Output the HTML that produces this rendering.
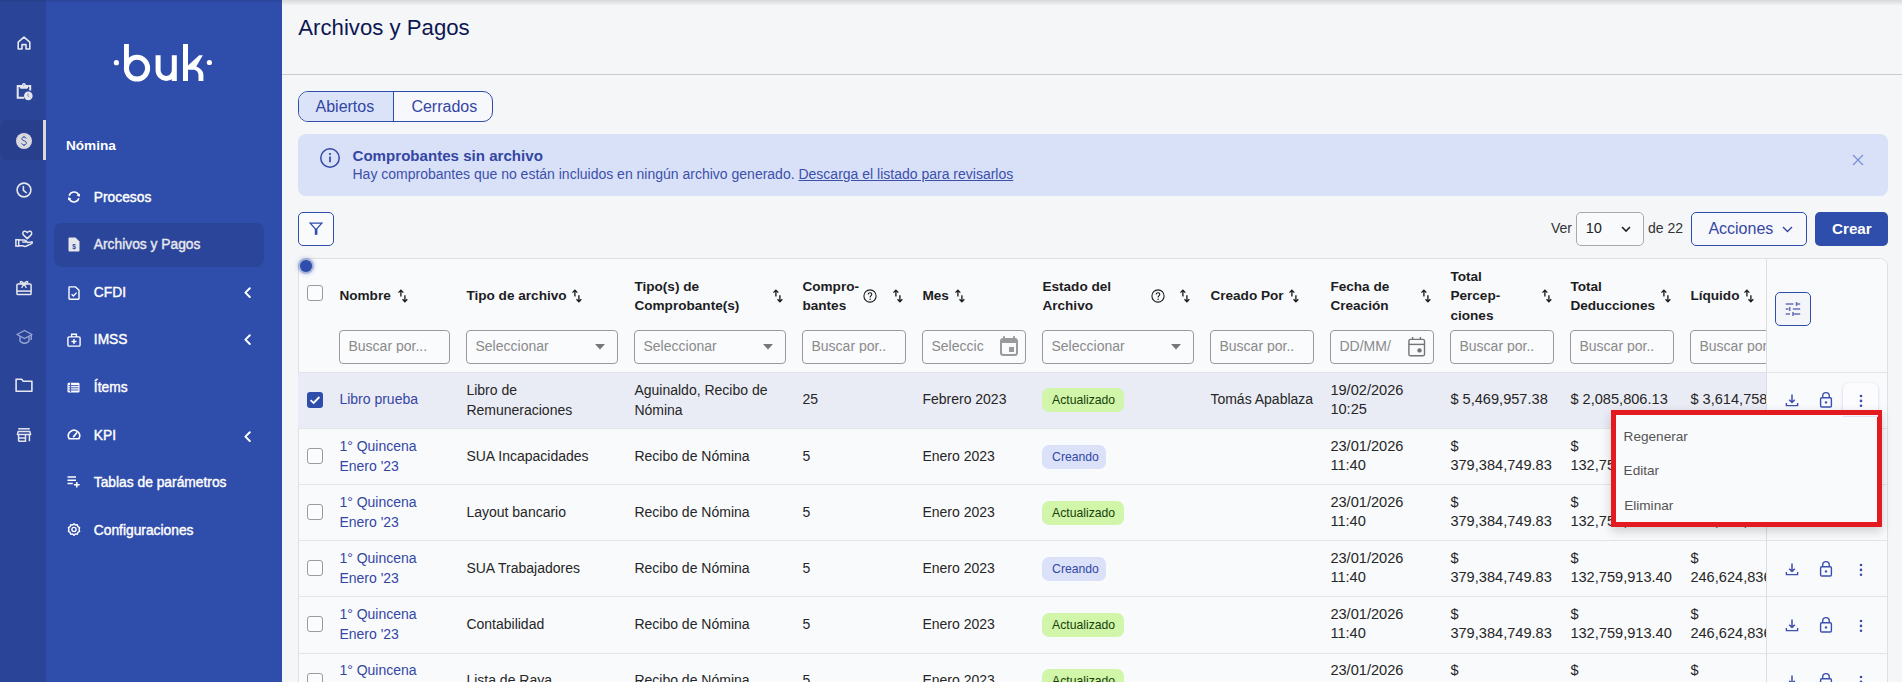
<!DOCTYPE html>
<html><head><meta charset="utf-8"><style>
html,body{margin:0;padding:0;}
body{width:1902px;height:682px;overflow:hidden;position:relative;font-family:"Liberation Sans", sans-serif;background:#f5f6f8;}
.t{position:absolute;white-space:nowrap;}
.b{position:absolute;}
.i{position:absolute;overflow:visible;}
</style></head><body>
<div class="b" style="left:0px;top:0px;width:46px;height:682px;background:#2a4598"></div><div class="b" style="left:0px;top:0px;width:282px;height:3px;background:linear-gradient(rgba(0,0,0,.10),rgba(0,0,0,0));z-index:3"></div><div class="b" style="left:46px;top:0px;width:236px;height:682px;background:#2f4daa"></div><div class="b" style="left:0px;top:120px;width:43px;height:40px;background:#273f8d;border-radius:8px 0 0 8px"></div><div class="b" style="left:43px;top:120px;width:3px;height:40px;background:#d9d9d9"></div><svg class="i" style="left:16px;top:35px;" width="16" height="16" viewBox="0 0 16 16"><path d="M2.2 7.2 L8 2.2 L13.8 7.2 V14 H10 V9.6 H6 V14 H2.2 Z" fill="none" stroke="#e6e7ee" stroke-width="1.6" stroke-linejoin="round"/></svg><svg class="i" style="left:14px;top:80px;" width="20" height="20" viewBox="0 0 20 20"><path d="M6 5.9 H3.7 V17.8 H10" fill="none" stroke="#e6e7ee" stroke-width="2"/><path d="M14.2 5.9 H16.2 V10.6" fill="none" stroke="#e6e7ee" stroke-width="2"/><path d="M5.7 5 H14.1 V7.6 C14.1 8.3 13.6 8.7 13 8.7 H6.8 C6.2 8.7 5.7 8.3 5.7 7.6 Z" fill="#e6e7ee"/><circle cx="9.9" cy="4.8" r="1.9" fill="#e6e7ee"/><circle cx="9.9" cy="4.9" r=".5" fill="#2a4598"/><circle cx="14.3" cy="15.9" r="4.3" fill="#e6e7ee"/><path d="M14 13.4 V15.8 L15.3 17.2" stroke="#6a7ab8" stroke-width=".9" fill="none"/></svg><svg class="i" style="left:16px;top:133px;" width="16" height="16" viewBox="0 0 16 16"><circle cx="8" cy="8" r="8" fill="#d9d9de"/><path d="M10.3 5.6 C10 4.6 9.1 4.1 8 4.1 C6.7 4.1 5.8 4.8 5.8 5.9 C5.8 8.2 10.4 7.3 10.4 10 C10.4 11.1 9.4 11.9 8 11.9 C6.8 11.9 5.9 11.3 5.6 10.3 M8 2.9 V4.1 M8 11.9 V13.1" fill="none" stroke="#3550a8" stroke-width="1"/></svg><svg class="i" style="left:16px;top:182px;" width="16" height="16" viewBox="0 0 16 16"><circle cx="8" cy="8" r="6.9" fill="none" stroke="#e6e7ee" stroke-width="1.6"/><path d="M7.4 4.6 V8.3 L10.2 10.6" fill="none" stroke="#e6e7ee" stroke-width="1.6" stroke-linecap="round"/></svg><svg class="i" style="left:14px;top:229px;" width="20" height="20" viewBox="0 0 20 20"><path d="M13.25 9.6 L9.6 6.1 C8.3 4.8 8.6 2.6 10.3 2.2 C11.6 1.9 12.6 2.7 13.25 3.6 C13.9 2.7 14.9 1.9 16.2 2.2 C17.9 2.6 18.2 4.8 16.9 6.1 Z" fill="none" stroke="#e6e7ee" stroke-width="1.5" stroke-linejoin="round"/><rect x="1.9" y="10.7" width="2.8" height="6.4" fill="none" stroke="#e6e7ee" stroke-width="1.5"/><path d="M4.7 11 H9.6 C11.2 11 12.6 11.8 12.8 13 H8.2 M4.7 16.8 H9 C10.2 17.6 11.2 17.6 12.5 17 L18 14.3 C18.8 13.6 18.2 12.6 17.2 12.9 L12.8 13.6" fill="none" stroke="#e6e7ee" stroke-width="1.5" stroke-linejoin="round"/></svg><svg class="i" style="left:16px;top:279px;" width="16" height="17" viewBox="0 0 16 17"><rect x="0.9" y="5" width="14.2" height="10.6" rx="1.2" fill="none" stroke="#e6e7ee" stroke-width="1.5"/><path d="M0.9 12.1 H15.1" stroke="#e6e7ee" stroke-width="1.5"/><path d="M8 5 C6.8 2.4 4.2 1.6 4.2 3.3 C4.2 4.6 6.6 5 8 5 C9.4 5 11.8 4.6 11.8 3.3 C11.8 1.6 9.2 2.4 8 5 L5.6 8.9 M8 5 L10.4 8.9" fill="none" stroke="#e6e7ee" stroke-width="1.3"/></svg><svg class="i" style="left:16px;top:329px;" width="17" height="16" viewBox="0 0 17 16"><path d="M8.5 1.5 L16 5.5 L8.5 9.5 L1 5.5 Z" fill="none" stroke="#9aa6d4" stroke-width="1.4" stroke-linejoin="round"/><path d="M4 7.3 V11.5 C4 13 6.5 14.3 8.5 14.3 C10.5 14.3 13 13 13 11.5 V7.3 M15.2 6 V11" fill="none" stroke="#9aa6d4" stroke-width="1.4"/></svg><svg class="i" style="left:15px;top:378px;" width="18" height="15" viewBox="0 0 18 15"><path d="M1.1 1.3 H6.6 L8.3 3.2 H16.9 V13.2 H1.1 Z" fill="none" stroke="#e6e7ee" stroke-width="1.6" stroke-linejoin="round"/></svg><svg class="i" style="left:16px;top:427px;" width="16" height="16" viewBox="0 0 16 16"><path d="M2.2 1.8 H13.8" stroke="#e6e7ee" stroke-width="1.5"/><path d="M2.2 4.4 H13.8 L14.6 7.6 H1.4 Z" fill="none" stroke="#e6e7ee" stroke-width="1.5" stroke-linejoin="round"/><path d="M2.6 7.6 V14.3 M13.4 7.6 V14.3 M2.6 14.3 H9.5 V7.6 M2.6 11 H9.5" fill="none" stroke="#e6e7ee" stroke-width="1.5"/></svg><svg class="i" style="left:100px;top:40px" width="120" height="50" viewBox="100 40 120 50"><circle cx="116.4" cy="62.7" r="2.6" fill="#fff"/><circle cx="209.4" cy="62.5" r="2.6" fill="#fff"/><path d="M126.45 44 V68.2" stroke="#fff" stroke-width="4.9" fill="none"/><ellipse cx="137" cy="68.2" rx="10.6" ry="10.9" fill="none" stroke="#fff" stroke-width="5"/><path d="M158.1 55.2 V70.3 A8.1 8.1 0 0 0 174.3 70.3 V55.2 M174.3 69 V80.9" fill="none" stroke="#fff" stroke-width="5"/><path d="M183 44 H188 V65.4 L199.2 55.2 H202.8 L196.3 66.5 C200.5 68.5 203.4 71 203.4 75 V80.9 H198.5 V75.5 C198.5 72 196.5 69.7 193 69.7 H188 V80.9 H183 Z" fill="#fff"/></svg><div class="t" style="left:66.0px;top:139.09px;font-size:13.6px;line-height:13.6px;font-weight:700;color:#fff;">Nómina</div><div class="b" style="left:54px;top:223px;width:210px;height:44px;background:#2a4599;border-radius:8px"></div><div class="t" style="left:93.8px;top:190.92px;font-size:13.8px;line-height:13.8px;font-weight:400;color:#fff;-webkit-text-stroke:0.4px #fff;">Procesos</div><div class="t" style="left:93.8px;top:237.62px;font-size:13.8px;line-height:13.8px;font-weight:400;color:#e8e8ee;-webkit-text-stroke:0.4px #e8e8ee;">Archivos y Pagos</div><div class="t" style="left:93.8px;top:285.82px;font-size:13.8px;line-height:13.8px;font-weight:400;color:#fff;-webkit-text-stroke:0.4px #fff;">CFDI</div><svg class="i" style="left:243px;top:286px;" width="9" height="12" viewBox="0 0 9 12"><path d="M6.8 2.2 L2.4 6.6 L6.8 11" fill="none" stroke="#fff" stroke-width="2" stroke-linecap="round" stroke-linejoin="round"/></svg><div class="t" style="left:93.8px;top:332.72px;font-size:13.8px;line-height:13.8px;font-weight:400;color:#fff;-webkit-text-stroke:0.4px #fff;">IMSS</div><svg class="i" style="left:243px;top:333px;" width="9" height="12" viewBox="0 0 9 12"><path d="M6.8 2.2 L2.4 6.6 L6.8 11" fill="none" stroke="#fff" stroke-width="2" stroke-linecap="round" stroke-linejoin="round"/></svg><div class="t" style="left:93.8px;top:381.32px;font-size:13.8px;line-height:13.8px;font-weight:400;color:#fff;-webkit-text-stroke:0.4px #fff;">Ítems</div><div class="t" style="left:93.8px;top:429.12px;font-size:13.8px;line-height:13.8px;font-weight:400;color:#fff;-webkit-text-stroke:0.4px #fff;">KPI</div><svg class="i" style="left:243px;top:430px;" width="9" height="12" viewBox="0 0 9 12"><path d="M6.8 2.2 L2.4 6.6 L6.8 11" fill="none" stroke="#fff" stroke-width="2" stroke-linecap="round" stroke-linejoin="round"/></svg><div class="t" style="left:93.8px;top:476.02px;font-size:13.8px;line-height:13.8px;font-weight:400;color:#fff;-webkit-text-stroke:0.4px #fff;">Tablas de parámetros</div><div class="t" style="left:93.8px;top:524.12px;font-size:13.8px;line-height:13.8px;font-weight:400;color:#fff;-webkit-text-stroke:0.4px #fff;">Configuraciones</div><svg class="i" style="left:66px;top:190px;" width="16" height="14" viewBox="0 0 16 14"><path d="M3.17 5.71 A5 5 0 0 1 12.53 4.89" fill="none" stroke="#fff" stroke-width="1.5"/><path d="M13.6 7 L14.1 3.5 L10.6 5.2 Z" fill="#fff"/><path d="M12.83 8.29 A5 5 0 0 1 3.47 9.11" fill="none" stroke="#fff" stroke-width="1.5"/><path d="M2.4 7 L1.9 10.5 L5.4 8.8 Z" fill="#fff"/></svg><svg class="i" style="left:68px;top:237px;" width="12" height="15" viewBox="0 0 12 15"><path d="M0.5 1.5 C0.5 1 1 0.5 1.5 0.5 H7.5 L11.5 4.5 V13.5 C11.5 14 11 14.5 10.5 14.5 H1.5 C1 14.5 0.5 14 0.5 13.5 Z" fill="#e6e6ec"/><text x="6" y="11.6" font-size="6.5" font-family="Liberation Sans" font-weight="700" text-anchor="middle" fill="#2a4599">$</text></svg><svg class="i" style="left:68px;top:286px;" width="12" height="14" viewBox="0 0 12 14"><path d="M1 1.6 C1 1.2 1.3 0.9 1.7 0.9 H7.6 L11 4.3 V12.6 C11 13 10.7 13.3 10.3 13.3 H1.7 C1.3 13.3 1 13 1 12.6 Z" fill="none" stroke="#fff" stroke-width="1.4" stroke-linejoin="round"/><path d="M3.6 8.2 L5.4 10 L8.6 6.6" fill="none" stroke="#fff" stroke-width="1.3"/></svg><svg class="i" style="left:67px;top:333px;" width="14" height="14" viewBox="0 0 14 14"><rect x="0.9" y="3.9" width="12.2" height="9.2" rx="1.2" fill="none" stroke="#fff" stroke-width="1.4"/><path d="M4.6 3.9 V1.2 H9.4 V3.9 M7 6 V11 M4.5 8.5 H9.5" fill="none" stroke="#fff" stroke-width="1.4"/></svg><svg class="i" style="left:67px;top:382px;" width="13" height="11" viewBox="0 0 13 11"><rect x="0.5" y="0.8" width="12" height="9.6" rx="1.2" fill="#fff"/><path d="M1.5 3.6 H11.5 M1.5 5.8 H11.5 M1.5 8 H11.5 M3.6 1 V10" stroke="#2f4daa" stroke-width="0.9"/></svg><svg class="i" style="left:67px;top:428px;" width="14" height="12" viewBox="0 0 14 12"><path d="M2.2 10.8 A5.6 5.6 0 1 1 11.8 10.8 Z" fill="none" stroke="#fff" stroke-width="1.6" stroke-linejoin="round"/><path d="M6.6 8.6 L9.6 5" stroke="#fff" stroke-width="1.7" stroke-linecap="round"/></svg><svg class="i" style="left:67px;top:475px;" width="14" height="13" viewBox="0 0 14 13"><path d="M0.5 2 H9 M0.5 5.2 H9 M0.5 8.4 H5.8 M9.8 7 V12.6 M7 9.8 H12.6" fill="none" stroke="#fff" stroke-width="1.5"/></svg><svg class="i" style="left:67px;top:522px;" width="14" height="15" viewBox="0 0 14 15"><path d="M7 1.2 L8.4 2.6 L10.3 2.3 L10.9 4.2 L12.6 5.1 L12 7 L12.6 8.9 L10.9 9.8 L10.3 11.7 L8.4 11.4 L7 12.8 L5.6 11.4 L3.7 11.7 L3.1 9.8 L1.4 8.9 L2 7 L1.4 5.1 L3.1 4.2 L3.7 2.3 L5.6 2.6 Z" fill="none" stroke="#fff" stroke-width="1.4" stroke-linejoin="round" transform="translate(0,0.5)"/><circle cx="7" cy="7.5" r="2.1" fill="none" stroke="#fff" stroke-width="1.4"/></svg><div class="b" style="left:282px;top:0px;width:1620px;height:682px;background:#f5f6f8"></div><div class="b" style="left:282px;top:0px;width:1620px;height:6px;background:linear-gradient(rgba(0,0,0,.12),rgba(0,0,0,0));z-index:3"></div><div class="t" style="left:298.3px;top:16.51px;font-size:22.2px;line-height:22.2px;font-weight:400;color:#0d1752;">Archivos y Pagos</div><div class="b" style="left:282px;top:74px;width:1620px;height:1px;background:#c9cbd1"></div><div class="b" style="left:298px;top:91px;width:195px;height:31px;border:1px solid #2f4daa;border-radius:10px;box-sizing:border-box;overflow:hidden;background:#f7f8fb"><div style="position:absolute;left:0;top:0;width:95px;height:31px;background:#dbe3f8;border-right:1px solid #2f4daa;box-sizing:border-box"></div></div><div class="t" style="left:315.5px;top:98.76px;font-size:16px;line-height:16px;font-weight:400;color:#3446a4;">Abiertos</div><div class="t" style="left:411.4px;top:98.76px;font-size:16px;line-height:16px;font-weight:400;color:#3446a4;">Cerrados</div><div class="b" style="left:298px;top:134px;width:1590px;height:62px;background:#d9e1f8;border-radius:8px"></div><svg class="i" style="left:320px;top:148px;" width="20" height="20" viewBox="0 0 20 20"><circle cx="10" cy="10" r="9.2" fill="none" stroke="#3446a4" stroke-width="1.5"/><circle cx="10" cy="6" r="1.1" fill="#3446a4"/><path d="M10 8.6 V14.2" stroke="#3446a4" stroke-width="1.7"/></svg><div class="t" style="left:352.5px;top:148.02px;font-size:15.1px;line-height:15.1px;font-weight:700;color:#3446a4;">Comprobantes sin archivo</div><div class="t" style="left:352.5px;top:167.15px;font-size:14px;line-height:14px;font-weight:400;color:#3c50aa;">Hay comprobantes que no están incluidos en ningún archivo generado. <span style="text-decoration:underline">Descarga el listado para revisarlos</span></div><svg class="i" style="left:1852px;top:154px;" width="12" height="12" viewBox="0 0 12 12"><path d="M1 1 L11 11 M11 1 L1 11" stroke="#7a8cd2" stroke-width="1.2"/></svg><div class="b" style="left:298px;top:212px;width:36px;height:34px;border:1.5px solid #2f4daa;border-radius:5px;box-sizing:border-box;background:#f9fafc"></div><svg class="i" style="left:309px;top:222px;" width="14" height="14" viewBox="0 0 14 14"><path d="M1.2 1.2 H12.8 L7 7.6 Z" fill="none" stroke="#2f4daa" stroke-width="1.3" stroke-linejoin="miter"/><rect x="5.8" y="7" width="2.6" height="5.8" fill="#2f4daa"/></svg><div class="t" style="left:1551.0px;top:220.55px;font-size:14px;line-height:14px;font-weight:400;color:#333;">Ver</div><div class="b" style="left:1576px;top:212px;width:68px;height:34px;border:1px solid #a9a9a9;border-radius:5px;box-sizing:border-box;background:#f9fafc"></div><div class="t" style="left:1585.7px;top:220.94px;font-size:14.6px;line-height:14.6px;font-weight:400;color:#222;">10</div><svg class="i" style="left:1621px;top:226px;" width="10" height="6" viewBox="0 0 10 6"><path d="M1 1 L5 5 L9 1" fill="none" stroke="#222" stroke-width="1.6"/></svg><div class="t" style="left:1648.0px;top:220.55px;font-size:14px;line-height:14px;font-weight:400;color:#333;">de 22</div><div class="b" style="left:1691px;top:212px;width:116px;height:34px;border:1px solid #2f4daa;border-radius:5px;box-sizing:border-box;background:#f7f8fb"></div><div class="t" style="left:1708.4px;top:220.76px;font-size:16px;line-height:16px;font-weight:400;color:#3446a4;">Acciones</div><svg class="i" style="left:1782px;top:226px;" width="11" height="7" viewBox="0 0 11 7"><path d="M1 1 L5.5 5.5 L10 1" fill="none" stroke="#3446a4" stroke-width="1.4"/></svg><div class="b" style="left:1815px;top:212px;width:73px;height:34px;background:#2f4daa;border-radius:5px"></div><div class="t" style="left:1832.0px;top:221.43px;font-size:15.2px;line-height:15.2px;font-weight:700;color:#fff;">Crear</div><div class="b" style="left:298px;top:258px;width:1590px;height:440px;border:1px solid #dfe0e4;border-radius:8px;box-sizing:border-box;background:#f9fafc;overflow:hidden" id="card"></div><div class="b" style="left:0;top:0;width:1766px;height:682px;overflow:hidden"><div class="t" style="left:339.4px;top:288.99px;font-size:13.6px;line-height:13.6px;font-weight:700;color:#1d1d1f;">Nombre</div><svg class="i" style="left:397.5px;top:289px;" width="11" height="14" viewBox="0 0 11 14"><path d="M2.9 7.4 V1.4 M0.5 3.6 L2.9 1.1 L5.3 3.6" fill="none" stroke="#1d1d1f" stroke-width="1.35"/><path d="M6.9 6.2 V12.4 M4.5 10.2 L6.9 12.7 L9.3 10.2" fill="none" stroke="#1d1d1f" stroke-width="1.35"/></svg><div class="b" style="left:339px;top:330px;width:111px;height:34px;border:1px solid #9b9b9b;border-radius:4px;box-sizing:border-box;background:#fafbfd;overflow:hidden"></div><div class="t" style="left:348.5px;top:339.25px;font-size:14px;line-height:14px;font-weight:400;color:#8a8a8a;width:99px;overflow:hidden;white-space:nowrap">Buscar por...</div><div class="t" style="left:466.4px;top:288.99px;font-size:13.6px;line-height:13.6px;font-weight:700;color:#1d1d1f;">Tipo de archivo</div><svg class="i" style="left:571.5px;top:289px;" width="11" height="14" viewBox="0 0 11 14"><path d="M2.9 7.4 V1.4 M0.5 3.6 L2.9 1.1 L5.3 3.6" fill="none" stroke="#1d1d1f" stroke-width="1.35"/><path d="M6.9 6.2 V12.4 M4.5 10.2 L6.9 12.7 L9.3 10.2" fill="none" stroke="#1d1d1f" stroke-width="1.35"/></svg><div class="b" style="left:466px;top:330px;width:152px;height:34px;border:1px solid #9b9b9b;border-radius:4px;box-sizing:border-box;background:#fafbfd;overflow:hidden"></div><div class="t" style="left:475.5px;top:339.25px;font-size:14px;line-height:14px;font-weight:400;color:#8a8a8a;width:140px;overflow:hidden;white-space:nowrap">Seleccionar</div><svg class="i" style="left:595px;top:344px;" width="10" height="6" viewBox="0 0 10 6"><path d="M0 0 H10 L5 5.5 Z" fill="#777"/></svg><div class="t" style="left:634.4px;top:279.99px;font-size:13.6px;line-height:13.6px;font-weight:700;color:#1d1d1f;">Tipo(s) de</div><div class="t" style="left:634.4px;top:298.99px;font-size:13.6px;line-height:13.6px;font-weight:700;color:#1d1d1f;">Comprobante(s)</div><svg class="i" style="left:773px;top:289px;" width="11" height="14" viewBox="0 0 11 14"><path d="M2.9 7.4 V1.4 M0.5 3.6 L2.9 1.1 L5.3 3.6" fill="none" stroke="#1d1d1f" stroke-width="1.35"/><path d="M6.9 6.2 V12.4 M4.5 10.2 L6.9 12.7 L9.3 10.2" fill="none" stroke="#1d1d1f" stroke-width="1.35"/></svg><div class="b" style="left:634px;top:330px;width:152px;height:34px;border:1px solid #9b9b9b;border-radius:4px;box-sizing:border-box;background:#fafbfd;overflow:hidden"></div><div class="t" style="left:643.5px;top:339.25px;font-size:14px;line-height:14px;font-weight:400;color:#8a8a8a;width:140px;overflow:hidden;white-space:nowrap">Seleccionar</div><svg class="i" style="left:763px;top:344px;" width="10" height="6" viewBox="0 0 10 6"><path d="M0 0 H10 L5 5.5 Z" fill="#777"/></svg><div class="t" style="left:802.4px;top:279.99px;font-size:13.6px;line-height:13.6px;font-weight:700;color:#1d1d1f;">Compro-</div><div class="t" style="left:802.4px;top:298.99px;font-size:13.6px;line-height:13.6px;font-weight:700;color:#1d1d1f;">bantes</div><svg class="i" style="left:893px;top:289px;" width="11" height="14" viewBox="0 0 11 14"><path d="M2.9 7.4 V1.4 M0.5 3.6 L2.9 1.1 L5.3 3.6" fill="none" stroke="#1d1d1f" stroke-width="1.35"/><path d="M6.9 6.2 V12.4 M4.5 10.2 L6.9 12.7 L9.3 10.2" fill="none" stroke="#1d1d1f" stroke-width="1.35"/></svg><svg class="i" style="left:863.0px;top:289px;" width="14" height="14" viewBox="0 0 14 14"><circle cx="7" cy="7" r="6.1" fill="none" stroke="#1d1d1f" stroke-width="1.1"/><path d="M5.2 5.5 C5.2 4.4 6 3.7 7 3.7 C8 3.7 8.8 4.4 8.8 5.3 C8.8 6.6 7.1 6.7 7.1 8.4" fill="none" stroke="#1d1d1f" stroke-width="1.15"/><circle cx="7.1" cy="10.3" r=".75" fill="#1d1d1f"/></svg><div class="b" style="left:802px;top:330px;width:104px;height:34px;border:1px solid #9b9b9b;border-radius:4px;box-sizing:border-box;background:#fafbfd;overflow:hidden"></div><div class="t" style="left:811.5px;top:339.25px;font-size:14px;line-height:14px;font-weight:400;color:#8a8a8a;width:92px;overflow:hidden;white-space:nowrap">Buscar por..</div><div class="t" style="left:922.4px;top:288.99px;font-size:13.6px;line-height:13.6px;font-weight:700;color:#1d1d1f;">Mes</div><svg class="i" style="left:954.5px;top:289px;" width="11" height="14" viewBox="0 0 11 14"><path d="M2.9 7.4 V1.4 M0.5 3.6 L2.9 1.1 L5.3 3.6" fill="none" stroke="#1d1d1f" stroke-width="1.35"/><path d="M6.9 6.2 V12.4 M4.5 10.2 L6.9 12.7 L9.3 10.2" fill="none" stroke="#1d1d1f" stroke-width="1.35"/></svg><div class="b" style="left:922px;top:330px;width:104px;height:34px;border:1px solid #9b9b9b;border-radius:4px;box-sizing:border-box;background:#fafbfd;overflow:hidden"></div><div class="t" style="left:931.5px;top:339.25px;font-size:14px;line-height:14px;font-weight:400;color:#8a8a8a;width:74px;overflow:hidden;white-space:nowrap">Seleccic</div><svg class="i" style="left:1000px;top:336px;" width="18" height="20" viewBox="0 0 18 20"><rect x="1" y="3" width="16" height="16" rx="2.2" fill="none" stroke="#9a9a9d" stroke-width="2"/><path d="M1 3.5 H17 V7 H1 Z" fill="#9a9a9d"/><path d="M4 0.2 V3 M14 0.2 V3" stroke="#9a9a9d" stroke-width="2"/><rect x="9" y="11" width="5" height="5" fill="#9a9a9d"/></svg><div class="t" style="left:1042.4px;top:279.99px;font-size:13.6px;line-height:13.6px;font-weight:700;color:#1d1d1f;">Estado del</div><div class="t" style="left:1042.4px;top:298.99px;font-size:13.6px;line-height:13.6px;font-weight:700;color:#1d1d1f;">Archivo</div><svg class="i" style="left:1180.4px;top:289px;" width="11" height="14" viewBox="0 0 11 14"><path d="M2.9 7.4 V1.4 M0.5 3.6 L2.9 1.1 L5.3 3.6" fill="none" stroke="#1d1d1f" stroke-width="1.35"/><path d="M6.9 6.2 V12.4 M4.5 10.2 L6.9 12.7 L9.3 10.2" fill="none" stroke="#1d1d1f" stroke-width="1.35"/></svg><svg class="i" style="left:1151.0px;top:289px;" width="14" height="14" viewBox="0 0 14 14"><circle cx="7" cy="7" r="6.1" fill="none" stroke="#1d1d1f" stroke-width="1.1"/><path d="M5.2 5.5 C5.2 4.4 6 3.7 7 3.7 C8 3.7 8.8 4.4 8.8 5.3 C8.8 6.6 7.1 6.7 7.1 8.4" fill="none" stroke="#1d1d1f" stroke-width="1.15"/><circle cx="7.1" cy="10.3" r=".75" fill="#1d1d1f"/></svg><div class="b" style="left:1042px;top:330px;width:152px;height:34px;border:1px solid #9b9b9b;border-radius:4px;box-sizing:border-box;background:#fafbfd;overflow:hidden"></div><div class="t" style="left:1051.5px;top:339.25px;font-size:14px;line-height:14px;font-weight:400;color:#8a8a8a;width:140px;overflow:hidden;white-space:nowrap">Seleccionar</div><svg class="i" style="left:1171px;top:344px;" width="10" height="6" viewBox="0 0 10 6"><path d="M0 0 H10 L5 5.5 Z" fill="#777"/></svg><div class="t" style="left:1210.4px;top:288.99px;font-size:13.6px;line-height:13.6px;font-weight:700;color:#1d1d1f;">Creado Por</div><svg class="i" style="left:1289.3px;top:289px;" width="11" height="14" viewBox="0 0 11 14"><path d="M2.9 7.4 V1.4 M0.5 3.6 L2.9 1.1 L5.3 3.6" fill="none" stroke="#1d1d1f" stroke-width="1.35"/><path d="M6.9 6.2 V12.4 M4.5 10.2 L6.9 12.7 L9.3 10.2" fill="none" stroke="#1d1d1f" stroke-width="1.35"/></svg><div class="b" style="left:1210px;top:330px;width:104px;height:34px;border:1px solid #9b9b9b;border-radius:4px;box-sizing:border-box;background:#fafbfd;overflow:hidden"></div><div class="t" style="left:1219.5px;top:339.25px;font-size:14px;line-height:14px;font-weight:400;color:#8a8a8a;width:92px;overflow:hidden;white-space:nowrap">Buscar por..</div><div class="t" style="left:1330.4px;top:279.99px;font-size:13.6px;line-height:13.6px;font-weight:700;color:#1d1d1f;">Fecha de</div><div class="t" style="left:1330.4px;top:298.99px;font-size:13.6px;line-height:13.6px;font-weight:700;color:#1d1d1f;">Creación</div><svg class="i" style="left:1420.5px;top:289px;" width="11" height="14" viewBox="0 0 11 14"><path d="M2.9 7.4 V1.4 M0.5 3.6 L2.9 1.1 L5.3 3.6" fill="none" stroke="#1d1d1f" stroke-width="1.35"/><path d="M6.9 6.2 V12.4 M4.5 10.2 L6.9 12.7 L9.3 10.2" fill="none" stroke="#1d1d1f" stroke-width="1.35"/></svg><div class="b" style="left:1330px;top:330px;width:104px;height:34px;border:1px solid #9b9b9b;border-radius:4px;box-sizing:border-box;background:#fafbfd;overflow:hidden"></div><div class="t" style="left:1339.5px;top:339.25px;font-size:14px;line-height:14px;font-weight:400;color:#8a8a8a;width:74px;overflow:hidden;white-space:nowrap">DD/MM/</div><svg class="i" style="left:1408px;top:336px;" width="18" height="21" viewBox="0 0 18 21"><rect x="0.9" y="3.4" width="15.6" height="16.4" rx="1.6" fill="none" stroke="#747476" stroke-width="1.4"/><path d="M0.9 8.4 H16.5" stroke="#747476" stroke-width="1.4"/><path d="M4.6 1 V4 M12.4 1 V4" stroke="#747476" stroke-width="1.4"/><circle cx="11.5" cy="14.4" r="2.2" fill="#747476"/></svg><div class="t" style="left:1450.4px;top:269.99px;font-size:13.6px;line-height:13.6px;font-weight:700;color:#1d1d1f;">Total</div><div class="t" style="left:1450.4px;top:288.99px;font-size:13.6px;line-height:13.6px;font-weight:700;color:#1d1d1f;">Percep-</div><div class="t" style="left:1450.4px;top:308.99px;font-size:13.6px;line-height:13.6px;font-weight:700;color:#1d1d1f;">ciones</div><svg class="i" style="left:1541.5px;top:289px;" width="11" height="14" viewBox="0 0 11 14"><path d="M2.9 7.4 V1.4 M0.5 3.6 L2.9 1.1 L5.3 3.6" fill="none" stroke="#1d1d1f" stroke-width="1.35"/><path d="M6.9 6.2 V12.4 M4.5 10.2 L6.9 12.7 L9.3 10.2" fill="none" stroke="#1d1d1f" stroke-width="1.35"/></svg><div class="b" style="left:1450px;top:330px;width:104px;height:34px;border:1px solid #9b9b9b;border-radius:4px;box-sizing:border-box;background:#fafbfd;overflow:hidden"></div><div class="t" style="left:1459.5px;top:339.25px;font-size:14px;line-height:14px;font-weight:400;color:#8a8a8a;width:92px;overflow:hidden;white-space:nowrap">Buscar por..</div><div class="t" style="left:1570.4px;top:279.99px;font-size:13.6px;line-height:13.6px;font-weight:700;color:#1d1d1f;">Total</div><div class="t" style="left:1570.4px;top:298.99px;font-size:13.6px;line-height:13.6px;font-weight:700;color:#1d1d1f;">Deducciones</div><svg class="i" style="left:1660.8px;top:289px;" width="11" height="14" viewBox="0 0 11 14"><path d="M2.9 7.4 V1.4 M0.5 3.6 L2.9 1.1 L5.3 3.6" fill="none" stroke="#1d1d1f" stroke-width="1.35"/><path d="M6.9 6.2 V12.4 M4.5 10.2 L6.9 12.7 L9.3 10.2" fill="none" stroke="#1d1d1f" stroke-width="1.35"/></svg><div class="b" style="left:1570px;top:330px;width:104px;height:34px;border:1px solid #9b9b9b;border-radius:4px;box-sizing:border-box;background:#fafbfd;overflow:hidden"></div><div class="t" style="left:1579.5px;top:339.25px;font-size:14px;line-height:14px;font-weight:400;color:#8a8a8a;width:92px;overflow:hidden;white-space:nowrap">Buscar por..</div><div class="t" style="left:1690.4px;top:288.99px;font-size:13.6px;line-height:13.6px;font-weight:700;color:#1d1d1f;">Líquido</div><svg class="i" style="left:1744px;top:289px;" width="11" height="14" viewBox="0 0 11 14"><path d="M2.9 7.4 V1.4 M0.5 3.6 L2.9 1.1 L5.3 3.6" fill="none" stroke="#1d1d1f" stroke-width="1.35"/><path d="M6.9 6.2 V12.4 M4.5 10.2 L6.9 12.7 L9.3 10.2" fill="none" stroke="#1d1d1f" stroke-width="1.35"/></svg><div class="b" style="left:1690px;top:330px;width:104px;height:34px;border:1px solid #9b9b9b;border-radius:4px;box-sizing:border-box;background:#fafbfd;overflow:hidden"></div><div class="t" style="left:1699.5px;top:339.25px;font-size:14px;line-height:14px;font-weight:400;color:#8a8a8a;width:92px;overflow:hidden;white-space:nowrap">Buscar por..</div><div class="b" style="left:307px;top:285px;width:16px;height:16px;border:1px solid #9b9b9b;border-radius:3px;box-sizing:border-box;background:#fbfcfd"></div><div class="b" style="left:298px;top:372px;width:1468px;height:1px;background:#e2e4ea"></div><div class="b" style="left:298px;top:373px;width:1468px;height:55px;background:#eaecf5"></div><div class="b" style="left:298px;top:428px;width:1468px;height:1px;background:#e2e4ea"></div><svg class="i" style="left:307px;top:392px;" width="16" height="16" viewBox="0 0 16 16"><rect x="0" y="0" width="16" height="16" rx="3" fill="#2f4daa"/><path d="M3.6 8.2 L6.6 11 L12.4 5" fill="none" stroke="#fff" stroke-width="1.8"/></svg><div class="t" style="left:339.4px;top:392.05px;font-size:14px;line-height:14px;font-weight:400;color:#3446a4;white-space:nowrap">Libro prueba</div><div class="t" style="left:466.4px;top:383.05px;font-size:14px;line-height:14px;font-weight:400;color:#262626;white-space:nowrap">Libro de</div><div class="t" style="left:466.4px;top:402.55px;font-size:14px;line-height:14px;font-weight:400;color:#262626;white-space:nowrap">Remuneraciones</div><div class="t" style="left:634.4px;top:383.05px;font-size:14px;line-height:14px;font-weight:400;color:#262626;white-space:nowrap">Aguinaldo, Recibo de</div><div class="t" style="left:634.4px;top:402.55px;font-size:14px;line-height:14px;font-weight:400;color:#262626;white-space:nowrap">Nómina</div><div class="t" style="left:802.4px;top:392.05px;font-size:14px;line-height:14px;font-weight:400;color:#262626;white-space:nowrap">25</div><div class="t" style="left:922.4px;top:392.05px;font-size:14px;line-height:14px;font-weight:400;color:#262626;white-space:nowrap">Febrero 2023</div><div class="b" style="left:1042px;top:388px;width:82px;height:24px;background:#d1f5a9;border-radius:7px"></div><div class="t" style="left:1052.1px;top:393.67px;font-size:12.2px;line-height:12.2px;font-weight:400;color:#163f08;">Actualizado</div><div class="t" style="left:1210.4px;top:392.05px;font-size:14px;line-height:14px;font-weight:400;color:#262626;white-space:nowrap">Tomás Apablaza</div><div class="t" style="left:1330.4px;top:382.54px;font-size:14.6px;line-height:14.6px;font-weight:400;color:#262626;white-space:nowrap">19/02/2026</div><div class="t" style="left:1330.4px;top:402.04px;font-size:14.6px;line-height:14.6px;font-weight:400;color:#262626;white-space:nowrap">10:25</div><div class="t" style="left:1450.4px;top:391.54px;font-size:14.6px;line-height:14.6px;font-weight:400;color:#262626;white-space:nowrap">$ 5,469,957.38</div><div class="t" style="left:1570.4px;top:391.54px;font-size:14.6px;line-height:14.6px;font-weight:400;color:#262626;white-space:nowrap">$ 2,085,806.13</div><div class="t" style="left:1690.4px;top:391.54px;font-size:14.6px;line-height:14.6px;font-weight:400;color:#262626;white-space:nowrap">$ 3,614,758.25</div><div class="b" style="left:298px;top:484px;width:1468px;height:1px;background:#e2e4ea"></div><div class="b" style="left:307px;top:448px;width:16px;height:16px;border:1px solid #9b9b9b;border-radius:3px;box-sizing:border-box;background:#fbfcfd"></div><div class="t" style="left:339.4px;top:439.05px;font-size:14px;line-height:14px;font-weight:400;color:#3446a4;white-space:nowrap">1° Quincena</div><div class="t" style="left:339.4px;top:458.55px;font-size:14px;line-height:14px;font-weight:400;color:#3446a4;white-space:nowrap">Enero '23</div><div class="t" style="left:466.4px;top:449.05px;font-size:14px;line-height:14px;font-weight:400;color:#262626;white-space:nowrap">SUA Incapacidades</div><div class="t" style="left:634.4px;top:449.05px;font-size:14px;line-height:14px;font-weight:400;color:#262626;white-space:nowrap">Recibo de Nómina</div><div class="t" style="left:802.4px;top:449.05px;font-size:14px;line-height:14px;font-weight:400;color:#262626;white-space:nowrap">5</div><div class="t" style="left:922.4px;top:449.05px;font-size:14px;line-height:14px;font-weight:400;color:#262626;white-space:nowrap">Enero 2023</div><div class="b" style="left:1042px;top:445px;width:64px;height:24px;background:#dae1f8;border-radius:7px"></div><div class="t" style="left:1052.1px;top:450.67px;font-size:12.2px;line-height:12.2px;font-weight:400;color:#3446a4;">Creando</div><div class="t" style="left:1210.4px;top:449.05px;font-size:14px;line-height:14px;font-weight:400;color:#262626;white-space:nowrap"></div><div class="t" style="left:1330.4px;top:438.54px;font-size:14.6px;line-height:14.6px;font-weight:400;color:#262626;white-space:nowrap">23/01/2026</div><div class="t" style="left:1330.4px;top:458.04px;font-size:14.6px;line-height:14.6px;font-weight:400;color:#262626;white-space:nowrap">11:40</div><div class="t" style="left:1450.4px;top:438.54px;font-size:14.6px;line-height:14.6px;font-weight:400;color:#262626;white-space:nowrap">$</div><div class="t" style="left:1450.4px;top:458.04px;font-size:14.6px;line-height:14.6px;font-weight:400;color:#262626;white-space:nowrap">379,384,749.83</div><div class="t" style="left:1570.4px;top:438.54px;font-size:14.6px;line-height:14.6px;font-weight:400;color:#262626;white-space:nowrap">$</div><div class="t" style="left:1570.4px;top:458.04px;font-size:14.6px;line-height:14.6px;font-weight:400;color:#262626;white-space:nowrap">132,759,913.40</div><div class="t" style="left:1690.4px;top:438.54px;font-size:14.6px;line-height:14.6px;font-weight:400;color:#262626;white-space:nowrap">$</div><div class="t" style="left:1690.4px;top:458.04px;font-size:14.6px;line-height:14.6px;font-weight:400;color:#262626;white-space:nowrap">246,624,836.43</div><div class="b" style="left:298px;top:540px;width:1468px;height:1px;background:#e2e4ea"></div><div class="b" style="left:307px;top:504px;width:16px;height:16px;border:1px solid #9b9b9b;border-radius:3px;box-sizing:border-box;background:#fbfcfd"></div><div class="t" style="left:339.4px;top:495.05px;font-size:14px;line-height:14px;font-weight:400;color:#3446a4;white-space:nowrap">1° Quincena</div><div class="t" style="left:339.4px;top:514.55px;font-size:14px;line-height:14px;font-weight:400;color:#3446a4;white-space:nowrap">Enero '23</div><div class="t" style="left:466.4px;top:505.05px;font-size:14px;line-height:14px;font-weight:400;color:#262626;white-space:nowrap">Layout bancario</div><div class="t" style="left:634.4px;top:505.05px;font-size:14px;line-height:14px;font-weight:400;color:#262626;white-space:nowrap">Recibo de Nómina</div><div class="t" style="left:802.4px;top:505.05px;font-size:14px;line-height:14px;font-weight:400;color:#262626;white-space:nowrap">5</div><div class="t" style="left:922.4px;top:505.05px;font-size:14px;line-height:14px;font-weight:400;color:#262626;white-space:nowrap">Enero 2023</div><div class="b" style="left:1042px;top:501px;width:82px;height:24px;background:#d1f5a9;border-radius:7px"></div><div class="t" style="left:1052.1px;top:506.67px;font-size:12.2px;line-height:12.2px;font-weight:400;color:#163f08;">Actualizado</div><div class="t" style="left:1210.4px;top:505.05px;font-size:14px;line-height:14px;font-weight:400;color:#262626;white-space:nowrap"></div><div class="t" style="left:1330.4px;top:494.54px;font-size:14.6px;line-height:14.6px;font-weight:400;color:#262626;white-space:nowrap">23/01/2026</div><div class="t" style="left:1330.4px;top:514.04px;font-size:14.6px;line-height:14.6px;font-weight:400;color:#262626;white-space:nowrap">11:40</div><div class="t" style="left:1450.4px;top:494.54px;font-size:14.6px;line-height:14.6px;font-weight:400;color:#262626;white-space:nowrap">$</div><div class="t" style="left:1450.4px;top:514.04px;font-size:14.6px;line-height:14.6px;font-weight:400;color:#262626;white-space:nowrap">379,384,749.83</div><div class="t" style="left:1570.4px;top:494.54px;font-size:14.6px;line-height:14.6px;font-weight:400;color:#262626;white-space:nowrap">$</div><div class="t" style="left:1570.4px;top:514.04px;font-size:14.6px;line-height:14.6px;font-weight:400;color:#262626;white-space:nowrap">132,759,913.40</div><div class="t" style="left:1690.4px;top:494.54px;font-size:14.6px;line-height:14.6px;font-weight:400;color:#262626;white-space:nowrap">$</div><div class="t" style="left:1690.4px;top:514.04px;font-size:14.6px;line-height:14.6px;font-weight:400;color:#262626;white-space:nowrap">246,624,836.43</div><div class="b" style="left:298px;top:596px;width:1468px;height:1px;background:#e2e4ea"></div><div class="b" style="left:307px;top:560px;width:16px;height:16px;border:1px solid #9b9b9b;border-radius:3px;box-sizing:border-box;background:#fbfcfd"></div><div class="t" style="left:339.4px;top:551.05px;font-size:14px;line-height:14px;font-weight:400;color:#3446a4;white-space:nowrap">1° Quincena</div><div class="t" style="left:339.4px;top:570.55px;font-size:14px;line-height:14px;font-weight:400;color:#3446a4;white-space:nowrap">Enero '23</div><div class="t" style="left:466.4px;top:561.05px;font-size:14px;line-height:14px;font-weight:400;color:#262626;white-space:nowrap">SUA Trabajadores</div><div class="t" style="left:634.4px;top:561.05px;font-size:14px;line-height:14px;font-weight:400;color:#262626;white-space:nowrap">Recibo de Nómina</div><div class="t" style="left:802.4px;top:561.05px;font-size:14px;line-height:14px;font-weight:400;color:#262626;white-space:nowrap">5</div><div class="t" style="left:922.4px;top:561.05px;font-size:14px;line-height:14px;font-weight:400;color:#262626;white-space:nowrap">Enero 2023</div><div class="b" style="left:1042px;top:557px;width:64px;height:24px;background:#dae1f8;border-radius:7px"></div><div class="t" style="left:1052.1px;top:562.67px;font-size:12.2px;line-height:12.2px;font-weight:400;color:#3446a4;">Creando</div><div class="t" style="left:1210.4px;top:561.05px;font-size:14px;line-height:14px;font-weight:400;color:#262626;white-space:nowrap"></div><div class="t" style="left:1330.4px;top:550.54px;font-size:14.6px;line-height:14.6px;font-weight:400;color:#262626;white-space:nowrap">23/01/2026</div><div class="t" style="left:1330.4px;top:570.04px;font-size:14.6px;line-height:14.6px;font-weight:400;color:#262626;white-space:nowrap">11:40</div><div class="t" style="left:1450.4px;top:550.54px;font-size:14.6px;line-height:14.6px;font-weight:400;color:#262626;white-space:nowrap">$</div><div class="t" style="left:1450.4px;top:570.04px;font-size:14.6px;line-height:14.6px;font-weight:400;color:#262626;white-space:nowrap">379,384,749.83</div><div class="t" style="left:1570.4px;top:550.54px;font-size:14.6px;line-height:14.6px;font-weight:400;color:#262626;white-space:nowrap">$</div><div class="t" style="left:1570.4px;top:570.04px;font-size:14.6px;line-height:14.6px;font-weight:400;color:#262626;white-space:nowrap">132,759,913.40</div><div class="t" style="left:1690.4px;top:550.54px;font-size:14.6px;line-height:14.6px;font-weight:400;color:#262626;white-space:nowrap">$</div><div class="t" style="left:1690.4px;top:570.04px;font-size:14.6px;line-height:14.6px;font-weight:400;color:#262626;white-space:nowrap">246,624,836.43</div><div class="b" style="left:298px;top:653px;width:1468px;height:1px;background:#e2e4ea"></div><div class="b" style="left:307px;top:616px;width:16px;height:16px;border:1px solid #9b9b9b;border-radius:3px;box-sizing:border-box;background:#fbfcfd"></div><div class="t" style="left:339.4px;top:607.05px;font-size:14px;line-height:14px;font-weight:400;color:#3446a4;white-space:nowrap">1° Quincena</div><div class="t" style="left:339.4px;top:626.55px;font-size:14px;line-height:14px;font-weight:400;color:#3446a4;white-space:nowrap">Enero '23</div><div class="t" style="left:466.4px;top:617.05px;font-size:14px;line-height:14px;font-weight:400;color:#262626;white-space:nowrap">Contabilidad</div><div class="t" style="left:634.4px;top:617.05px;font-size:14px;line-height:14px;font-weight:400;color:#262626;white-space:nowrap">Recibo de Nómina</div><div class="t" style="left:802.4px;top:617.05px;font-size:14px;line-height:14px;font-weight:400;color:#262626;white-space:nowrap">5</div><div class="t" style="left:922.4px;top:617.05px;font-size:14px;line-height:14px;font-weight:400;color:#262626;white-space:nowrap">Enero 2023</div><div class="b" style="left:1042px;top:613px;width:82px;height:24px;background:#d1f5a9;border-radius:7px"></div><div class="t" style="left:1052.1px;top:618.67px;font-size:12.2px;line-height:12.2px;font-weight:400;color:#163f08;">Actualizado</div><div class="t" style="left:1210.4px;top:617.05px;font-size:14px;line-height:14px;font-weight:400;color:#262626;white-space:nowrap"></div><div class="t" style="left:1330.4px;top:606.54px;font-size:14.6px;line-height:14.6px;font-weight:400;color:#262626;white-space:nowrap">23/01/2026</div><div class="t" style="left:1330.4px;top:626.04px;font-size:14.6px;line-height:14.6px;font-weight:400;color:#262626;white-space:nowrap">11:40</div><div class="t" style="left:1450.4px;top:606.54px;font-size:14.6px;line-height:14.6px;font-weight:400;color:#262626;white-space:nowrap">$</div><div class="t" style="left:1450.4px;top:626.04px;font-size:14.6px;line-height:14.6px;font-weight:400;color:#262626;white-space:nowrap">379,384,749.83</div><div class="t" style="left:1570.4px;top:606.54px;font-size:14.6px;line-height:14.6px;font-weight:400;color:#262626;white-space:nowrap">$</div><div class="t" style="left:1570.4px;top:626.04px;font-size:14.6px;line-height:14.6px;font-weight:400;color:#262626;white-space:nowrap">132,759,913.40</div><div class="t" style="left:1690.4px;top:606.54px;font-size:14.6px;line-height:14.6px;font-weight:400;color:#262626;white-space:nowrap">$</div><div class="t" style="left:1690.4px;top:626.04px;font-size:14.6px;line-height:14.6px;font-weight:400;color:#262626;white-space:nowrap">246,624,836.43</div><div class="b" style="left:298px;top:709px;width:1468px;height:1px;background:#e2e4ea"></div><div class="b" style="left:307px;top:673px;width:16px;height:16px;border:1px solid #9b9b9b;border-radius:3px;box-sizing:border-box;background:#fbfcfd"></div><div class="t" style="left:339.4px;top:663.05px;font-size:14px;line-height:14px;font-weight:400;color:#3446a4;white-space:nowrap">1° Quincena</div><div class="t" style="left:339.4px;top:682.55px;font-size:14px;line-height:14px;font-weight:400;color:#3446a4;white-space:nowrap">Enero '23</div><div class="t" style="left:466.4px;top:673.05px;font-size:14px;line-height:14px;font-weight:400;color:#262626;white-space:nowrap">Lista de Raya</div><div class="t" style="left:634.4px;top:673.05px;font-size:14px;line-height:14px;font-weight:400;color:#262626;white-space:nowrap">Recibo de Nómina</div><div class="t" style="left:802.4px;top:673.05px;font-size:14px;line-height:14px;font-weight:400;color:#262626;white-space:nowrap">5</div><div class="t" style="left:922.4px;top:673.05px;font-size:14px;line-height:14px;font-weight:400;color:#262626;white-space:nowrap">Enero 2023</div><div class="b" style="left:1042px;top:669px;width:82px;height:24px;background:#d1f5a9;border-radius:7px"></div><div class="t" style="left:1052.1px;top:674.67px;font-size:12.2px;line-height:12.2px;font-weight:400;color:#163f08;">Actualizado</div><div class="t" style="left:1210.4px;top:673.05px;font-size:14px;line-height:14px;font-weight:400;color:#262626;white-space:nowrap"></div><div class="t" style="left:1330.4px;top:662.54px;font-size:14.6px;line-height:14.6px;font-weight:400;color:#262626;white-space:nowrap">23/01/2026</div><div class="t" style="left:1330.4px;top:682.04px;font-size:14.6px;line-height:14.6px;font-weight:400;color:#262626;white-space:nowrap">11:40</div><div class="t" style="left:1450.4px;top:662.54px;font-size:14.6px;line-height:14.6px;font-weight:400;color:#262626;white-space:nowrap">$</div><div class="t" style="left:1450.4px;top:682.04px;font-size:14.6px;line-height:14.6px;font-weight:400;color:#262626;white-space:nowrap">379,384,749.83</div><div class="t" style="left:1570.4px;top:662.54px;font-size:14.6px;line-height:14.6px;font-weight:400;color:#262626;white-space:nowrap">$</div><div class="t" style="left:1570.4px;top:682.04px;font-size:14.6px;line-height:14.6px;font-weight:400;color:#262626;white-space:nowrap">132,759,913.40</div><div class="t" style="left:1690.4px;top:662.54px;font-size:14.6px;line-height:14.6px;font-weight:400;color:#262626;white-space:nowrap">$</div><div class="t" style="left:1690.4px;top:682.04px;font-size:14.6px;line-height:14.6px;font-weight:400;color:#262626;white-space:nowrap">246,624,836.43</div></div><div class="b" style="left:1766px;top:259px;width:121px;height:423px;border-left:1px solid #dcdee4;background:#f9fafc;border-top-right-radius:7px;box-sizing:border-box"></div><div class="b" style="left:1775px;top:292px;width:36px;height:34px;border:1.5px solid #2f4daa;border-radius:5px;box-sizing:border-box;background:#f4f5f8"></div><svg class="i" style="left:1784px;top:300px;" width="18" height="17" viewBox="0 0 18 17"><path d="M1.7 4 H9.4 M13.1 4 H16.2 M12.5 2 V6 M1.7 8.9 H4.5 M8.8 8.9 H16.2 M5.7 6.9 V10.9 M1.7 13.9 H6 M9.7 13.9 H16.2 M9 11.9 V15.9" fill="none" stroke="#6672b5" stroke-width="1.5"/></svg><div class="b" style="left:1767px;top:372px;width:120px;height:1px;background:#e2e4ea"></div><div class="b" style="left:1767px;top:428px;width:120px;height:1px;background:#e2e4ea"></div><div class="b" style="left:1843px;top:383px;width:35px;height:35px;background:#fcfcfe;border-radius:6px;box-shadow:0 1px 3px rgba(60,80,170,.28)"></div><svg class="i" style="left:1785px;top:394px;" width="14" height="13" viewBox="0 0 14 13"><path d="M7 0.5 V8.4 M4.2 5.7 L7 8.5 L9.8 5.7" fill="none" stroke="#3a4fae" stroke-width="1.5"/><path d="M1.4 9 V11.6 H12.6 V9" fill="none" stroke="#3a4fae" stroke-width="1.4"/></svg><svg class="i" style="left:1818px;top:392px;" width="16" height="17" viewBox="0 0 16 17"><path d="M4.7 5.8 V3.9 A3.3 3.3 0 0 1 11.3 3.9 V5.8" fill="none" stroke="#3a4fae" stroke-width="1.4"/><rect x="2.6" y="5.7" width="10.8" height="9.3" rx="1.2" fill="none" stroke="#3a4fae" stroke-width="1.4"/><circle cx="8" cy="10.4" r="1.2" fill="#3a4fae"/></svg><svg class="i" style="left:1858px;top:393px;" width="6" height="14" viewBox="0 0 6 14"><circle cx="3" cy="3" r="1.3" fill="#3a4fae"/><circle cx="3" cy="7.9" r="1.3" fill="#3a4fae"/><circle cx="3" cy="12.8" r="1.3" fill="#3a4fae"/></svg><div class="b" style="left:1767px;top:484px;width:120px;height:1px;background:#e2e4ea"></div><svg class="i" style="left:1785px;top:451px;" width="14" height="13" viewBox="0 0 14 13"><path d="M7 0.5 V8.4 M4.2 5.7 L7 8.5 L9.8 5.7" fill="none" stroke="#3a4fae" stroke-width="1.5"/><path d="M1.4 9 V11.6 H12.6 V9" fill="none" stroke="#3a4fae" stroke-width="1.4"/></svg><svg class="i" style="left:1818px;top:449px;" width="16" height="17" viewBox="0 0 16 17"><path d="M4.7 5.8 V3.9 A3.3 3.3 0 0 1 11.3 3.9 V5.8" fill="none" stroke="#3a4fae" stroke-width="1.4"/><rect x="2.6" y="5.7" width="10.8" height="9.3" rx="1.2" fill="none" stroke="#3a4fae" stroke-width="1.4"/><circle cx="8" cy="10.4" r="1.2" fill="#3a4fae"/></svg><svg class="i" style="left:1858px;top:450px;" width="6" height="14" viewBox="0 0 6 14"><circle cx="3" cy="3" r="1.3" fill="#3a4fae"/><circle cx="3" cy="7.9" r="1.3" fill="#3a4fae"/><circle cx="3" cy="12.8" r="1.3" fill="#3a4fae"/></svg><div class="b" style="left:1767px;top:540px;width:120px;height:1px;background:#e2e4ea"></div><svg class="i" style="left:1785px;top:507px;" width="14" height="13" viewBox="0 0 14 13"><path d="M7 0.5 V8.4 M4.2 5.7 L7 8.5 L9.8 5.7" fill="none" stroke="#3a4fae" stroke-width="1.5"/><path d="M1.4 9 V11.6 H12.6 V9" fill="none" stroke="#3a4fae" stroke-width="1.4"/></svg><svg class="i" style="left:1818px;top:505px;" width="16" height="17" viewBox="0 0 16 17"><path d="M4.7 5.8 V3.9 A3.3 3.3 0 0 1 11.3 3.9 V5.8" fill="none" stroke="#3a4fae" stroke-width="1.4"/><rect x="2.6" y="5.7" width="10.8" height="9.3" rx="1.2" fill="none" stroke="#3a4fae" stroke-width="1.4"/><circle cx="8" cy="10.4" r="1.2" fill="#3a4fae"/></svg><svg class="i" style="left:1858px;top:506px;" width="6" height="14" viewBox="0 0 6 14"><circle cx="3" cy="3" r="1.3" fill="#3a4fae"/><circle cx="3" cy="7.9" r="1.3" fill="#3a4fae"/><circle cx="3" cy="12.8" r="1.3" fill="#3a4fae"/></svg><div class="b" style="left:1767px;top:596px;width:120px;height:1px;background:#e2e4ea"></div><svg class="i" style="left:1785px;top:563px;" width="14" height="13" viewBox="0 0 14 13"><path d="M7 0.5 V8.4 M4.2 5.7 L7 8.5 L9.8 5.7" fill="none" stroke="#3a4fae" stroke-width="1.5"/><path d="M1.4 9 V11.6 H12.6 V9" fill="none" stroke="#3a4fae" stroke-width="1.4"/></svg><svg class="i" style="left:1818px;top:561px;" width="16" height="17" viewBox="0 0 16 17"><path d="M4.7 5.8 V3.9 A3.3 3.3 0 0 1 11.3 3.9 V5.8" fill="none" stroke="#3a4fae" stroke-width="1.4"/><rect x="2.6" y="5.7" width="10.8" height="9.3" rx="1.2" fill="none" stroke="#3a4fae" stroke-width="1.4"/><circle cx="8" cy="10.4" r="1.2" fill="#3a4fae"/></svg><svg class="i" style="left:1858px;top:562px;" width="6" height="14" viewBox="0 0 6 14"><circle cx="3" cy="3" r="1.3" fill="#3a4fae"/><circle cx="3" cy="7.9" r="1.3" fill="#3a4fae"/><circle cx="3" cy="12.8" r="1.3" fill="#3a4fae"/></svg><div class="b" style="left:1767px;top:653px;width:120px;height:1px;background:#e2e4ea"></div><svg class="i" style="left:1785px;top:619px;" width="14" height="13" viewBox="0 0 14 13"><path d="M7 0.5 V8.4 M4.2 5.7 L7 8.5 L9.8 5.7" fill="none" stroke="#3a4fae" stroke-width="1.5"/><path d="M1.4 9 V11.6 H12.6 V9" fill="none" stroke="#3a4fae" stroke-width="1.4"/></svg><svg class="i" style="left:1818px;top:617px;" width="16" height="17" viewBox="0 0 16 17"><path d="M4.7 5.8 V3.9 A3.3 3.3 0 0 1 11.3 3.9 V5.8" fill="none" stroke="#3a4fae" stroke-width="1.4"/><rect x="2.6" y="5.7" width="10.8" height="9.3" rx="1.2" fill="none" stroke="#3a4fae" stroke-width="1.4"/><circle cx="8" cy="10.4" r="1.2" fill="#3a4fae"/></svg><svg class="i" style="left:1858px;top:618px;" width="6" height="14" viewBox="0 0 6 14"><circle cx="3" cy="3" r="1.3" fill="#3a4fae"/><circle cx="3" cy="7.9" r="1.3" fill="#3a4fae"/><circle cx="3" cy="12.8" r="1.3" fill="#3a4fae"/></svg><div class="b" style="left:1767px;top:709px;width:120px;height:1px;background:#e2e4ea"></div><svg class="i" style="left:1785px;top:675px;" width="14" height="13" viewBox="0 0 14 13"><path d="M7 0.5 V8.4 M4.2 5.7 L7 8.5 L9.8 5.7" fill="none" stroke="#3a4fae" stroke-width="1.5"/><path d="M1.4 9 V11.6 H12.6 V9" fill="none" stroke="#3a4fae" stroke-width="1.4"/></svg><svg class="i" style="left:1818px;top:673px;" width="16" height="17" viewBox="0 0 16 17"><path d="M4.7 5.8 V3.9 A3.3 3.3 0 0 1 11.3 3.9 V5.8" fill="none" stroke="#3a4fae" stroke-width="1.4"/><rect x="2.6" y="5.7" width="10.8" height="9.3" rx="1.2" fill="none" stroke="#3a4fae" stroke-width="1.4"/><circle cx="8" cy="10.4" r="1.2" fill="#3a4fae"/></svg><svg class="i" style="left:1858px;top:674px;" width="6" height="14" viewBox="0 0 6 14"><circle cx="3" cy="3" r="1.3" fill="#3a4fae"/><circle cx="3" cy="7.9" r="1.3" fill="#3a4fae"/><circle cx="3" cy="12.8" r="1.3" fill="#3a4fae"/></svg><div class="b" style="left:300px;top:260px;width:12px;height:12px;border-radius:50%;background:#2f4daa;box-shadow:0 0 0 2px rgba(47,77,170,.25),0 0 4px 2px rgba(47,77,170,.3)"></div><div class="b" style="left:1611px;top:410px;width:271px;height:117px;border:5px solid #e31a1f;box-sizing:border-box;background:#f9fafc;box-shadow:0 4px 10px rgba(0,0,0,.18);z-index:5"></div><div class="b" style="left:1843px;top:415px;width:35px;height:2px;background:linear-gradient(#fcfcfe,#d5dbf0);z-index:6"></div><div class="t" style="left:1623.6px;top:430.49px;font-size:13.6px;line-height:13.6px;font-weight:400;color:#555;z-index:6">Regenerar</div><div class="t" style="left:1623.6px;top:464.49px;font-size:13.6px;line-height:13.6px;font-weight:400;color:#555;z-index:6">Editar</div><div class="t" style="left:1624.2px;top:499.49px;font-size:13.6px;line-height:13.6px;font-weight:400;color:#555;z-index:6">Eliminar</div>
</body></html>
